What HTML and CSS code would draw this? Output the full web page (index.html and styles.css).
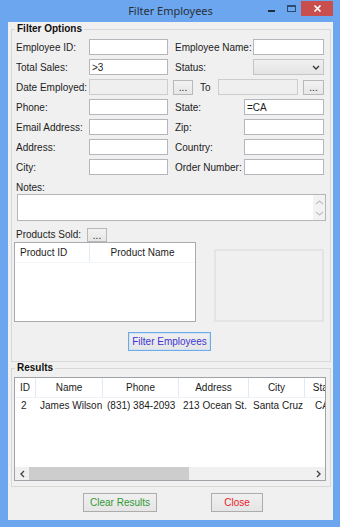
FILE: index.html
```html
<!DOCTYPE html>
<html lang="en">
<head>
    <meta charset="UTF-8">
    <title>Filter Employees</title>
    <link rel="stylesheet" href="styles.css">
</head>
<body>
    <div class="window">
        <div class="titlebar">
            <div></div>
            <div class="title">Filter Employees</div>
            <div class="controls">
                <span class="ctl min"><svg width="19" height="15"><rect x="6" y="9" width="7" height="2" fill="#1f2b3b"/></svg></span>
                <span class="ctl max"><svg width="20" height="15"><rect x="6.5" y="4.5" width="8" height="6" fill="none" stroke="#2d4a70"/><rect x="6" y="4" width="9" height="2" fill="#2d4a70"/></svg></span>
                <span class="ctl close"><svg width="32" height="15"><path d="M13.5 4.5 L19.5 10.5 M19.5 4.5 L13.5 10.5" stroke="#fff" stroke-width="1.7"/></svg></span>
            </div>
        </div>

        <div class="client">
            <fieldset class="group filter">
                <legend>Filter Options</legend>
                <div class="group-body">
                    <div class="row">
                        <label class="lbl">Employee ID:</label>
                        <input class="txt" type="text">
                        <label class="lbl lbl2">Employee Name:</label>
                        <input class="txt short" type="text">
                    </div>
                    <div class="row">
                        <label class="lbl">Total Sales:</label>
                        <input class="txt" type="text" value="&gt;3">
                        <label class="lbl lbl2">Status:</label>
                        <div class="combo">
                            <svg width="8" height="5"><path d="M1 1 L4 4 L7 1" fill="none" stroke="#333" stroke-width="1.3"/></svg>
                        </div>
                    </div>
                    <div class="row">
                        <label class="lbl">Date Employed:</label>
                        <input class="txt dis" type="text" disabled>
                        <button class="dots">...</button>
                        <span class="to">To</span>
                        <input class="txt dis wide" type="text" disabled>
                        <button class="dots end">...</button>
                    </div>
                    <div class="row">
                        <label class="lbl">Phone:</label>
                        <input class="txt" type="text">
                        <label class="lbl lbl2">State:</label>
                        <input class="txt wide" type="text" value="=CA">
                    </div>
                    <div class="row">
                        <label class="lbl">Email Address:</label>
                        <input class="txt" type="text">
                        <label class="lbl lbl2">Zip:</label>
                        <input class="txt wide" type="text">
                    </div>
                    <div class="row">
                        <label class="lbl">Address:</label>
                        <input class="txt" type="text">
                        <label class="lbl lbl2">Country:</label>
                        <input class="txt wide" type="text">
                    </div>
                    <div class="row">
                        <label class="lbl">City:</label>
                        <input class="txt" type="text">
                        <label class="lbl lbl2">Order Number:</label>
                        <input class="txt wide" type="text">
                    </div>

                    <div class="notes-label">Notes:</div>
                    <div class="notes">
                        <div class="vscroll">
                            <svg width="9" height="5"><path d="M1 4 L4.5 1 L8 4" fill="none" stroke="#c2c2c2" stroke-width="1.2"/></svg>
                            <svg width="9" height="5"><path d="M1 1 L4.5 4 L8 1" fill="none" stroke="#c2c2c2" stroke-width="1.2"/></svg>
                        </div>
                    </div>

                    <div class="prod-row">
                        <label class="prod-lbl">Products Sold:</label>
                        <button class="dots">...</button>
                    </div>
                    <div class="lists">
                        <div class="listview">
                            <div class="lv-head">
                                <div class="lv-col first">Product ID</div>
                                <div class="lv-col second">Product Name</div>
                            </div>
                        </div>
                        <div class="picture"></div>
                    </div>

                    <button class="btn default">Filter Employees</button>
                </div>
            </fieldset>

            <fieldset class="group results">
                <legend>Results</legend>
                <div class="group-body">
                    <div class="grid">
                        <div class="grid-row head">
                            <div class="c c-id">ID</div>
                            <div class="c c-name">Name</div>
                            <div class="c c-phone">Phone</div>
                            <div class="c c-addr">Address</div>
                            <div class="c c-city">City</div>
                            <div class="c c-state">State</div>
                        </div>
                        <div class="grid-body">
                            <div class="grid-row">
                                <div class="c c-id">2</div>
                                <div class="c c-name">James Wilson</div>
                                <div class="c c-phone">(831) 384-2093</div>
                                <div class="c c-addr">213 Ocean St.</div>
                                <div class="c c-city">Santa Cruz</div>
                                <div class="c c-state">CA</div>
                            </div>
                        </div>
                        <div class="hscroll">
                            <div class="arrow"><svg width="5" height="8"><path d="M4 1 L1 4 L4 7" fill="none" stroke="#444" stroke-width="1.4"/></svg></div>
                            <div class="thumb"></div>
                            <div class="track"></div>
                            <div class="arrow"><svg width="5" height="8"><path d="M1 1 L4 4 L1 7" fill="none" stroke="#444" stroke-width="1.4"/></svg></div>
                        </div>
                    </div>
                </div>
            </fieldset>

            <div class="actions">
                <button class="btn clear">Clear Results</button>
                <button class="btn close-btn">Close</button>
            </div>
        </div>
    </div>
</body>
</html>
```

FILE: styles.css
```css
body {
    margin: 0;
    font-family: "Liberation Sans", Arial, sans-serif;
    font-size: 10px;
    color: #1c1c1c;
}
.window {
    width: 340px;
    height: 527px;
    background-color: #6ba6ef;
    box-sizing: border-box;
    padding: 0 7px 7px 8px;
}
.titlebar {
    height: 22px;
    display: grid;
    grid-template-columns: 1fr auto 1fr;
    margin: 0 -7px 0 -8px;
    padding: 0 7px 0 8px;
}
.title {
    font-family: "Noto Sans", sans-serif;
    font-size: 11px;
    color: #2a2f36;
    line-height: 22px;
}
.controls {
    display: flex;
    justify-self: end;
    margin-top: 1px;
    height: 15px;
}
.ctl {
    display: block;
    height: 15px;
}
.ctl svg {
    display: block;
}
.ctl.close {
    background-color: #c94f4f;
}
.client {
    height: 498px;
    background-color: #f0f0f0;
    overflow: hidden;
}
.group {
    margin: 0 2px 0 3px;
    padding: 0;
    border: 1px solid #d8d8d8;
    min-inline-size: 0;
}
.group legend {
    font-weight: bold;
    line-height: 12px;
    padding: 0 2px;
    margin-left: 3px;
    color: #111;
}
.filter {
    margin-top: 1px;
}
.filter .group-body {
    padding: 2px 0 10px 4px;
}
.row {
    display: flex;
    align-items: center;
    height: 20px;
    width: 308px;
}
.lbl {
    width: 73px;
    white-space: nowrap;
}
.lbl2 {
    width: auto;
    flex: 1;
    margin-left: 7px;
}
.txt {
    width: 79px;
    height: 16px;
    box-sizing: border-box;
    margin: 0;
    padding: 0 2px;
    border: 1px solid #b4b6bb;
    background-color: #fff;
    font: inherit;
    color: #1c1c1c;
    outline: none;
}
.txt.wide {
    width: 80px;
}
.txt.short {
    width: 71px;
}
.txt.dis {
    background-color: #efefef;
    border-color: #cdcdcd;
}
.combo {
    width: 71px;
    height: 16px;
    box-sizing: border-box;
    border: 1px solid #c5c5c5;
    background: linear-gradient(#f0f0f0, #e4e4e4);
    display: flex;
    align-items: center;
    justify-content: flex-end;
    padding-right: 3px;
}
.combo svg {
    display: block;
}
.dots {
    width: 20px;
    height: 15px;
    box-sizing: border-box;
    margin: 0 0 0 5px;
    padding: 0;
    border: 1px solid #b9b9b9;
    background: linear-gradient(#f2f2f2, #e6e6e6);
    font: inherit;
    line-height: 13px;
    color: #222;
}
.dots.end {
    width: 21px;
}
.to {
    width: 18px;
    margin-left: 7px;
}
.notes-label {
    margin-top: 5px;
    line-height: 12px;
}
.notes {
    width: 309px;
    height: 27px;
    box-sizing: border-box;
    margin-left: 1px;
    border: 1px solid #b4b6bb;
    background-color: #fff;
    display: flex;
    justify-content: flex-end;
}
.vscroll {
    width: 12px;
    background-color: #f2f2f2;
    display: flex;
    flex-direction: column;
    align-items: center;
    justify-content: space-between;
    padding: 5px 0 4px;
    box-sizing: border-box;
}
.vscroll svg {
    display: block;
}
.prod-row {
    display: flex;
    align-items: center;
    height: 15px;
    margin-top: 6px;
}
.prod-lbl {
    width: 71px;
}
.prod-row .dots {
    margin-left: 0;
    height: 14px;
}
.lists {
    display: flex;
    align-items: flex-end;
    gap: 18px;
    margin-left: -2px;
}
.listview {
    width: 182px;
    height: 80px;
    box-sizing: border-box;
    border: 1px solid #a9abb0;
    background-color: #fff;
}
.lv-head {
    display: flex;
    height: 19px;
    line-height: 19px;
    border-bottom: 1px solid #f1f4f8;
}
.lv-col.first {
    width: 75px;
    box-sizing: border-box;
    padding-left: 5px;
    border-right: 1px solid #e3ebf6;
}
.lv-col.second {
    flex: 1;
    text-align: center;
}
.picture {
    width: 110px;
    height: 73px;
    box-sizing: border-box;
    border: 2px solid #e4e4e4;
}
.btn {
    height: 19px;
    box-sizing: border-box;
    margin: 0;
    padding: 0;
    border: 1px solid #acacac;
    background: linear-gradient(#f0f0f0, #e5e5e5);
    font: inherit;
    line-height: 17px;
}
.btn.default {
    display: block;
    width: 83px;
    margin: 10px 0 0 112px;
    border-color: #6fa9e6;
    box-shadow: inset 0 0 0 1px #cfe3f7;
    color: #3d34d3;
}
.results .group-body {
    padding: 3px 0 5px 2px;
}
.grid {
    width: 312px;
    height: 104px;
    box-sizing: border-box;
    border: 1px solid #a0a3a8;
    background-color: #fff;
    display: flex;
    flex-direction: column;
    overflow: hidden;
}
.grid-row {
    display: flex;
    height: 15px;
    line-height: 15px;
    white-space: nowrap;
}
.grid-row.head {
    height: 19px;
    line-height: 19px;
    border-bottom: 1px solid #eef2f8;
}
.head .c {
    text-align: center;
    border-right: 1px solid #e1eaf6;
}
.grid-body {
    flex: 1;
}
.c {
    flex: none;
    overflow: hidden;
    box-sizing: border-box;
}
.grid-body .c {
    padding-left: 4px;
}
.grid-body .c-id {
    padding-left: 6px;
}
.grid-body .c-state {
    padding-left: 10px;
}
.c-id { width: 21px; }
.c-name { width: 67px; }
.c-phone { width: 76px; }
.c-addr { width: 70px; }
.c-city { width: 56px; }
.c-state { width: 40px; }
.hscroll {
    display: flex;
    height: 13px;
    background-color: #f0f0f0;
}
.arrow {
    width: 14px;
    display: flex;
    align-items: center;
    justify-content: center;
}
.arrow svg {
    display: block;
}
.thumb {
    width: 160px;
    background-color: #cdcdcd;
}
.track {
    flex: 1;
}
.actions {
    display: flex;
    gap: 54px;
    padding-left: 75px;
    margin-top: 6px;
}
.btn.clear {
    width: 74px;
    color: #2f9a34;
}
.btn.close-btn {
    width: 52px;
    color: #e8202b;
}
```
